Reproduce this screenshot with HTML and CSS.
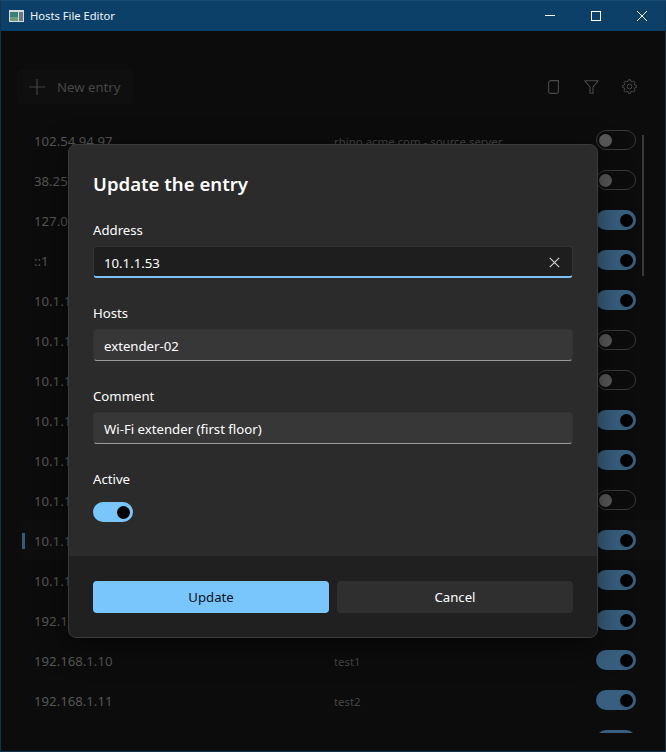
FILE: index.html
```html
<!DOCTYPE html>
<html lang="en">
<head>
<meta charset="utf-8">
<title>Hosts File Editor</title>
<link rel="stylesheet" href="styles.css">
</head>
<body>
<div class="window">
  <header class="titlebar">
    <svg class="app-icon" width="15" height="12" viewBox="0 0 15 12"><rect width="15" height="12" fill="#d5dde0"/><rect x="1" y="2" width="8" height="9" fill="#3e7f78"/><rect x="1" y="7" width="8" height="4" fill="#6f9c78"/><rect x="10" y="2" width="4" height="9" fill="#6b7880"/></svg>
    <span class="app-title">Hosts File Editor</span>
    <div class="win-controls">
      <button class="win-btn"><svg width="12" height="12" viewBox="0 0 12 12"><path d="M1 5.500h10" stroke="#fff" stroke-width="1"/></svg></button>
      <button class="win-btn"><svg width="12" height="12" viewBox="0 0 12 12"><rect x="1.500" y="1.500" width="9" height="9" fill="none" stroke="#fff"/></svg></button>
      <button class="win-btn"><svg width="12" height="12" viewBox="0 0 12 12"><path d="M1 1l10 10M11 1L1 11" stroke="#fff" stroke-width="1"/></svg></button>
    </div>
  </header>
  <main class="content">
    <div class="toolbar">
      <div class="new-entry">
        <svg width="16" height="16" viewBox="0 0 16 16"><path d="M8 0v16M0 8h16" stroke="#434343" stroke-width="1.200"/></svg>
        <span>New entry</span>
      </div>
      <div class="tools">
        <svg class="page-icon" width="11" height="14" viewBox="0 0 11 14"><path d="M3 .6h7.400v11a1.800 1.800 0 0 1-1.800 1.800H2.400A1.800 1.800 0 0 1 .6 11.600V3A2.400 2.400 0 0 1 3 .6z" fill="none" stroke="#4a4a4a" stroke-width="1.100"/></svg>
        <svg width="15" height="14" viewBox="0 0 15 14"><path d="M.7.7h13.600L9 7v6.300H6V7z" fill="none" stroke="#4a4a4a" stroke-width="1.100" stroke-linejoin="round"/></svg>
        <svg width="15" height="15" viewBox="0 0 24 24"><circle cx="12" cy="12" r="3.800" fill="none" stroke="#4a4a4a" stroke-width="1.600"/><path d="M20.310 9.770L22.860 10.280V13.720L20.310 14.230L19.450 16.300L20.900 18.470L18.470 20.900L16.300 19.450L14.230 20.310L13.720 22.860H10.280L9.770 20.310L7.700 19.450L5.530 20.900L3.100 18.470L4.550 16.300L3.690 14.230L1.140 13.720V10.280L3.690 9.770L4.550 7.700L3.100 5.530L5.530 3.100L7.700 4.550L9.770 3.690L10.280 1.140H13.720L14.230 3.690L16.300 4.550L18.470 3.100L20.900 5.530L19.450 7.700z" fill="none" stroke="#4a4a4a" stroke-width="1.600" stroke-linejoin="round"/></svg>
      </div>
    </div>
    <div class="list-wrap">
      <div class="list">
        <div class="row"><span class="addr">102.54.94.97</span><span class="host">rhino.acme.com - source server</span><i class="tg"></i></div>
        <div class="row"><span class="addr">38.25.63</span><span class="host"></span><i class="tg"></i></div>
        <div class="row"><span class="addr">127.0.0.1</span><span class="host"></span><i class="tg on"></i></div>
        <div class="row"><span class="addr">::1</span><span class="host"></span><i class="tg on"></i></div>
        <div class="row"><span class="addr">10.1.1.30</span><span class="host"></span><i class="tg on"></i></div>
        <div class="row"><span class="addr">10.1.1.31</span><span class="host"></span><i class="tg"></i></div>
        <div class="row"><span class="addr">10.1.1.32</span><span class="host"></span><i class="tg"></i></div>
        <div class="row"><span class="addr">10.1.1.50</span><span class="host"></span><i class="tg on"></i></div>
        <div class="row"><span class="addr">10.1.1.51</span><span class="host"></span><i class="tg on"></i></div>
        <div class="row"><span class="addr">10.1.1.52</span><span class="host"></span><i class="tg"></i></div>
        <div class="row selected"><span class="addr">10.1.1.53</span><span class="host"></span><i class="tg on"></i></div>
        <div class="row"><span class="addr">10.1.1.54</span><span class="host"></span><i class="tg on"></i></div>
        <div class="row"><span class="addr">192.168.1.9</span><span class="host"></span><i class="tg on"></i></div>
        <div class="row"><span class="addr">192.168.1.10</span><span class="host">test1</span><i class="tg on"></i></div>
        <div class="row"><span class="addr">192.168.1.11</span><span class="host">test2</span><i class="tg on"></i></div>
        <div class="row"><span class="addr"></span><span class="host"></span><i class="tg on"></i></div>
      </div>
      <div class="scrollbar"></div>
    </div>
  </main>
  <section class="dialog">
    <div class="dialog-body">
      <h1>Update the entry</h1>
      <div class="field">
        <label>Address</label>
        <div class="input focus"><span>10.1.1.53</span><svg width="11" height="11" viewBox="0 0 11 11"><path d="M.8.8l9.400 9.400M10.200.8L.8 10.200" stroke="#d0d0d0" stroke-width="1.200"/></svg></div>
      </div>
      <div class="field">
        <label>Hosts</label>
        <div class="input"><span>extender-02</span></div>
      </div>
      <div class="field">
        <label>Comment</label>
        <div class="input"><span>Wi-Fi extender (first floor)</span></div>
      </div>
      <div class="field toggle-field">
        <label>Active</label>
        <i class="tg bright"></i>
      </div>
    </div>
    <div class="dialog-foot">
      <button class="btn primary">Update</button>
      <button class="btn">Cancel</button>
    </div>
  </section>
</div>
</body>
</html>
```
FILE: styles.css
```css
* { box-sizing: border-box; }
html, body { margin: 0; height: 100%; }
body { font-family: "Noto Sans", "Open Sans", sans-serif; background: #0c0c0c; overflow: hidden; }
.window { position: relative; width: 666px; height: 752px; display: flex; flex-direction: column; border: 1px solid #12344f; border-top-color: #1a4a70; background: #0c0c0c; overflow: hidden; }
.titlebar { height: 30px; flex: none; display: flex; align-items: center; background: #0c4068; color: #f0f4f7; }
.app-icon { margin-left: 8px; margin-top: -1px; }
.app-title { margin-left: 6px; font-size: 11.200px; margin-top: -1px; }
.win-controls { margin-left: auto; display: flex; }
.win-btn { width: 46px; height: 30px; padding: 0; border: 0; background: none; display: flex; align-items: center; justify-content: center; }
.content { flex: 1; min-height: 0; display: flex; flex-direction: column; }
.toolbar { height: 89px; flex: none; display: flex; align-items: center; justify-content: space-between; padding: 22px 28px 0 16px; }
.new-entry { width: 116px; height: 35px; padding-left: 12px; display: flex; align-items: center; gap: 12px; color: #474747; font-size: 13.200px; background: #0f0f0f; border-radius: 4px; white-space: nowrap; }
.tools { display: flex; align-items: center; gap: 23px; }
.page-icon { margin-right: 2px; }
.list-wrap { position: relative; height: 613px; overflow: hidden; flex: none; }
.row { height: 40px; display: flex; align-items: center; padding-left: 33px; padding-right: 29px; font-size: 13.200px; color: #565656; position: relative; }
.addr { width: 300px; flex: none; margin-top: 2px; }
.host { flex: 1; font-size: 11.400px; color: #454545; margin-top: 2px; }
.selected { background: linear-gradient(90deg, #0c0c0c 16px, #0e0e0e 24px); }
.selected::before { content: ""; position: absolute; left: 21px; top: 13px; width: 3px; height: 16px; background: #35597a; }
.tg { display: block; position: relative; width: 40px; height: 20px; flex: none; border-radius: 10px; border: 1px solid #3a3a3a; }
.tg::after { content: ""; position: absolute; left: 2px; top: 2.500px; width: 13px; height: 13px; border-radius: 50%; background: #595959; }
.tg.on { background: #385f7f; border: 0; }
.tg.on::after { left: 23.500px; top: 3.500px; background: #000; }
.tg.bright { background: #79c6fd; border: 0; }
.tg.bright::after { left: 23.500px; top: 3.500px; background: #000; }
.scrollbar { position: absolute; left: 641px; top: 15px; width: 2px; height: 141px; background: #3a3a3a; }
.dialog { position: absolute; left: 67px; top: 143px; width: 530px; height: 494px; border: 1px solid #3a3a3a; border-radius: 8px; background: #2b2b2b; display: flex; flex-direction: column; overflow: hidden; box-shadow: 0 8px 30px rgba(0,0,0,.5); color: #fff; }
.dialog-body { flex: 1; padding: 22px 24px 0; }
h1 { margin: 0 0 20px; font-size: 18.600px; line-height: 33px; font-weight: 600; }
.field { margin-bottom: 25px; }
.field label { display: block; font-size: 13.200px; line-height: 20px; margin-bottom: 6px; color: #fff; }
.toggle-field label { margin-bottom: 13px; }
.input { height: 32px; display: flex; align-items: center; justify-content: space-between; padding: 0 12px 0 10px; font-size: 13.200px; background: #373737; border-radius: 4px; border: 1px solid #333; border-bottom: 1px solid #9a9a9a; }
.input span { margin-top: 2px; }
.input svg { margin-top: 1px; }
.input.focus { background: #1e1e1e; border-color: #333; border-bottom: 2px solid #7cc1f5; }
.dialog-foot { height: 81px; flex: none; display: flex; gap: 8px; padding: 25px 24px 0; background: #202020; }
.btn { flex: 1; height: 32px; border: 0; border-radius: 4px; background: #2f2f2f; color: #fff; font: 13.200px "Noto Sans", sans-serif; }
.btn.primary { background: #79c6fd; color: #08121c; }
```
